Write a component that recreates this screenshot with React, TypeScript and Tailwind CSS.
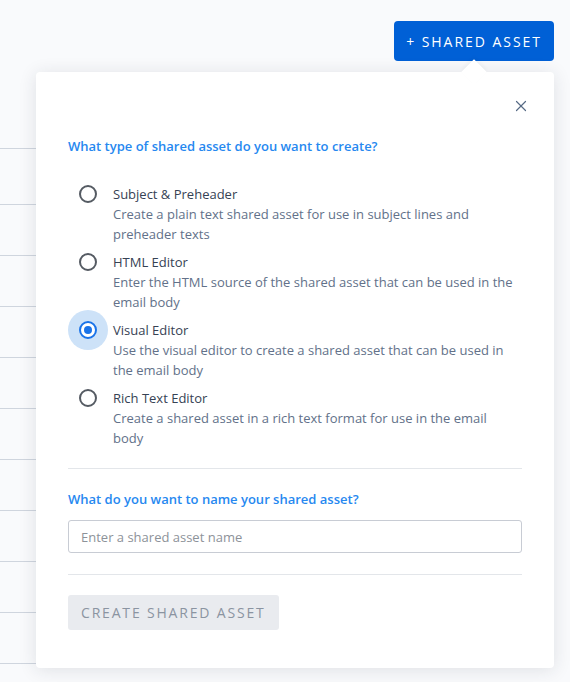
import { X } from "lucide-react";

const options = [
  {
    title: "Subject & Preheader",
    desc: "Create a plain text shared asset for use in subject lines and preheader texts",
  },
  {
    title: "HTML Editor",
    desc: "Enter the HTML source of the shared asset that can be used in the email body",
  },
  {
    title: "Visual Editor",
    desc: "Use the visual editor to create a shared asset that can be used in the email body",
  },
  {
    title: "Rich Text Editor",
    desc: "Create a shared asset in a rich text format for use in the email body",
  },
];

function Radio({ checked }: { checked: boolean }) {
  if (checked) {
    return (
      <div className="w-10 h-10 -m-[11px] rounded-full bg-[#cde2f8] flex items-center justify-center shrink-0">
        <div className="w-[18px] h-[18px] rounded-full border-2 border-[#1a73e8] flex items-center justify-center bg-white">
          <div className="w-2 h-2 rounded-full bg-[#1a73e8]" />
        </div>
      </div>
    );
  }
  return <div className="w-[18px] h-[18px] rounded-full border-2 border-[#555b63] shrink-0" />;
}

export default function App() {
  const selected = 2;
  return (
    <div
      className="relative w-[570px] h-[682px] overflow-hidden bg-[#f9fafc]"
      style={{ fontFamily: "'Open Sans', sans-serif" }}
    >
      {/* list rows behind the popover */}
      <div className="absolute left-0 top-[148px] w-9 flex flex-col">
        <div className="h-14 border-t border-[#cfd5de]" />
        {Array.from({ length: 10 }).map((_, i) => (
          <div key={i} className="h-[51px] border-t border-[#cfd5de]" />
        ))}
      </div>

      <div className="flex justify-end pt-[21px] pr-4">
        <button className="h-10 px-3 rounded bg-[#0060d6] text-white text-[14px] font-medium tracking-[0.14em]">
          + SHARED ASSET
        </button>
      </div>

      <div className="absolute left-9 top-[72px] w-[518px] bg-white rounded shadow-[0_2px_18px_rgba(30,40,60,0.12)] px-8 pb-[38px]">
        <div className="absolute -top-[9px] right-[71px] w-[18px] h-[18px] rotate-45 bg-white shadow-[-2px_-2px_4px_rgba(30,40,60,0.04)]" />
        <div className="relative flex justify-end pt-[25px] -mr-[8px]">
          <X size={18} strokeWidth={1.6} className="text-[#566a85]" />
        </div>

        <p className="mt-[22px] text-[13px] font-semibold text-[#2688f0]">
          What type of shared asset do you want to create?
        </p>

        <div className="mt-[27px] flex flex-col gap-[8px]">
          {options.map((o, i) => (
            <div key={o.title} className="flex items-start gap-[16px]">
              <div className="w-[18px] h-[18px] mt-[1px] ml-[11px] flex items-center justify-center shrink-0">
                <Radio checked={i === selected} />
              </div>
              <div className="w-[402px] text-[13px] leading-[20px]">
                <div className="text-[#364254]">{o.title}</div>
                <div className="text-[#627189]">{o.desc}</div>
              </div>
            </div>
          ))}
        </div>

        <div className="mt-[20px] border-t border-[#e3e6ea]" />

        <p className="mt-[21px] text-[13px] font-semibold text-[#2688f0]">
          What do you want to name your shared asset?
        </p>
        <input
          placeholder="Enter a shared asset name"
          className="mt-[11px] w-full h-[33px] px-3 rounded-[3px] border border-[#c8ccd4] text-[13px] placeholder:text-[#8d9299] outline-none"
        />

        <div className="mt-[21px] border-t border-[#e3e6ea]" />

        <button className="mt-[20px] h-[35px] px-[13px] rounded-[3px] bg-[#e9ebef] text-[#8b94a1] text-[14px] tracking-[0.13em]">
          CREATE SHARED ASSET
        </button>
      </div>
    </div>
  );
}
